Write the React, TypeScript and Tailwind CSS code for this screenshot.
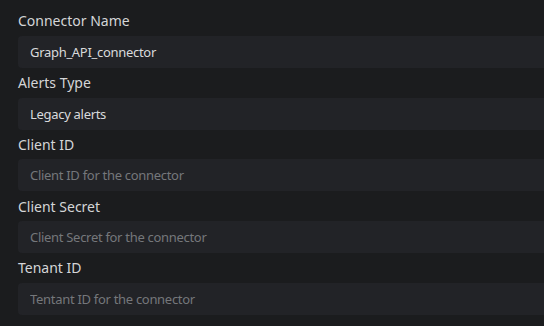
const fields = [
  { label: "Connector Name", value: "Graph_API_connector", placeholder: "" },
  { label: "Alerts Type", value: "Legacy alerts", placeholder: "" },
  { label: "Client ID", value: "", placeholder: "Client ID for the connector" },
  { label: "Client Secret", value: "", placeholder: "Client Secret for the connector" },
  { label: "Tenant ID", value: "", placeholder: "Tentant ID for the connector" },
];

export default function App() {
  return (
    <div
      className="w-[544px] h-[326px] overflow-hidden bg-[#1b1c1e] pt-[6px] pl-[18px]"
      style={{ fontFamily: '"Noto Sans", "Open Sans", sans-serif' }}
    >
      <div className="w-[560px] flex flex-col">
        {fields.map((f) => (
          <div key={f.label} className="flex flex-col">
            <label className="h-[29.75px] flex items-center text-[14px] text-[#d4d5d7]">{f.label}</label>
            <input
              readOnly
              defaultValue={f.value}
              placeholder={f.placeholder}
              className="h-[32px] rounded-[4px] bg-[#222327] px-3 text-[13px] tracking-[-0.3px] text-[#d9dadc] placeholder:text-[#75777b] outline-none"
            />
          </div>
        ))}
      </div>
    </div>
  );
}
